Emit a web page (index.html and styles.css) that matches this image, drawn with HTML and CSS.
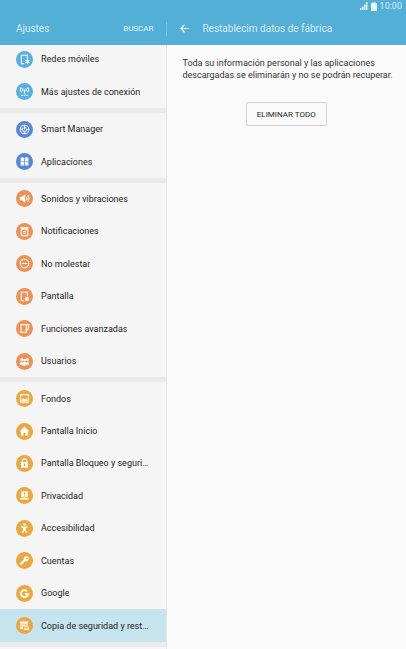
FILE: index.html
```html
<!DOCTYPE html>
<html lang="es">
<head>
    <meta charset="UTF-8">
    <meta name="viewport" content="width=device-width, initial-scale=1.0">
    <title>Ajustes</title>
    <link rel="stylesheet" href="styles.css">
</head>
<body>
    <header class="top">
        <div class="status">
            <svg class="signal" viewBox="0 0 16 16" aria-hidden="true"><path d="M0 16v-4h3v4zM4 16v-7h3v7zM8 16v-11h3v11zM12 16v-16h3v16z"/></svg>
            <svg class="battery" viewBox="0 0 12 18" aria-hidden="true"><path d="M3 0h6v2h3v16H0V2h3z"/></svg>
            <span>10:00</span>
        </div>
        <div class="bar">
            <div class="bar-left">
                <h1>Ajustes</h1>
                <button class="search">BUSCAR</button>
            </div>
            <div class="bar-right">
                <button class="back" aria-label="Atrás">
                    <svg viewBox="0 0 24 24"><path d="M23 12H3M12 2L2 12l10 10"/></svg>
                </button>
                <h2>Restablecim datos de fábrica</h2>
            </div>
        </div>
    </header>

    <main>
        <nav class="sidebar">
            <ul class="group sky">
                <li><a href="#"><svg class="icon" viewBox="0 0 48 48"><path d="M23 36H15V12h17v10M32 23v14M26 26l12 7M38 26l-12 7"/></svg><span>Redes móviles</span></a></li>
                <li><a href="#"><svg class="icon" viewBox="0 0 48 48"><path d="M15 12q-5 7 0 14M33 12q5 7 0 14M20 15q-3 4 0 8M28 15q3 4 0 8M24 18v12"/><path class="fill" d="M15 33h4v4h-4zM22 33h4v4h-4zM29 33h4v4h-4z"/></svg><span>Más ajustes de conexión</span></a></li>
            </ul>
            <ul class="group blue">
                <li><a href="#"><svg class="icon" viewBox="0 0 48 48"><circle cx="24" cy="24" r="12"/><circle cx="24" cy="24" r="6" stroke-dasharray="6 2"/><path d="M24 15v9M15 24h4M29 24h4M24 29v4"/></svg><span>Smart Manager</span></a></li>
                <li><a href="#"><svg class="icon" viewBox="0 0 48 48"><path class="fill" d="M13 13h10v10H13zM25 13h10v10H25zM13 25h10v10H13zM25 25h10v10H25z"/></svg><span>Aplicaciones</span></a></li>
            </ul>
            <ul class="group orange">
                <li><a href="#"><svg class="icon" viewBox="0 0 48 48"><path class="fill" d="M11 19h6l9-7v24l-9-7h-6z"/><path d="M29 19q4 5 0 10M33 15q7 9 0 18"/></svg><span>Sonidos y vibraciones</span></a></li>
                <li><a href="#"><svg class="icon" viewBox="0 0 48 48"><path d="M15 13h18v23H15zM15 18h18M20 24h8M20 29h8M20 11v6M28 11v6"/></svg><span>Notificaciones</span></a></li>
                <li><a href="#"><svg class="icon" viewBox="0 0 48 48"><circle cx="24" cy="24" r="12"/><path d="M17 24h14"/></svg><span>No molestar</span></a></li>
                <li><a href="#"><svg class="icon" viewBox="0 0 48 48"><path d="M22 36H15V12h17v11"/><circle cx="31" cy="31" r="5"/><circle class="fill" cx="31" cy="31" r="3"/></svg><span>Pantalla</span></a></li>
                <li><a href="#"><svg class="icon" viewBox="0 0 48 48"><path d="M14 13h15v22H14zM29 14l7-1-2 13-5 5"/></svg><span>Funciones avanzadas</span></a></li>
                <li><a href="#"><svg class="icon" viewBox="0 0 48 48"><g class="fill"><circle cx="16" cy="19" r="4"/><circle cx="32" cy="19" r="4"/><path d="M11 33q0-10 6-9l3 5-3 4zM37 33q0-10-6-9l-3 5 3 4z"/><circle cx="24" cy="20" r="4"/><path d="M18 35q0-10 6-10t6 10z"/></g></svg><span>Usuarios</span></a></li>
            </ul>
            <ul class="group amber">
                <li><a href="#"><svg class="icon" viewBox="0 0 48 48"><rect x="13" y="13" width="22" height="22" rx="2"/><path class="fill" d="M16 32v-5l5-3 4 3 4-4 3 3v6z"/></svg><span>Fondos</span></a></li>
                <li><a href="#"><svg class="icon" viewBox="0 0 48 48"><path class="fill" d="M24 10l14 14h-4v12h-7v-8h-6v8h-7V24h-4z"/></svg><span>Pantalla Inicio</span></a></li>
                <li><a href="#"><svg class="icon" viewBox="0 0 48 48"><path d="M18 22v-5q0-6 6-6t6 6v5"/><path class="fill" fill-rule="evenodd" d="M14 20h20v16H14zM22 25v6h4v-6z"/></svg><span>Pantalla Bloqueo y seguri…</span></a></li>
                <li><a href="#"><svg class="icon" viewBox="0 0 48 48"><path class="fill" fill-rule="evenodd" d="M15 12h18v17H15zM22 15v7h4v-7zM22 24v3h4v-3zM12 31h24v4H12z"/></svg><span>Privacidad</span></a></li>
                <li><a href="#"><svg class="icon" viewBox="0 0 48 48"><circle class="fill" cx="24" cy="13" r="4"/><path class="fill" d="M14 17l7 2h6l7-2v3l-6 3v6l4 8h-4l-4-8-4 8h-4l4-8v-6l-6-3z"/></svg><span>Accesibilidad</span></a></li>
                <li><a href="#"><svg class="icon" viewBox="0 0 48 48"><path class="fill" fill-rule="evenodd" d="M22 22q-2-5 3-9 6-3 10 2 3 6-2 10-4 3-8 1l-4 4-1 4-3-1-2 4-4-1v-4zM29 16v4h4v-4z"/></svg><span>Cuentas</span></a></li>
                <li><a href="#"><svg class="icon bold" viewBox="0 0 48 48"><path d="M31 17a10 10 0 1 0 3 8h-9"/></svg><span>Google</span></a></li>
                <li class="selected"><a href="#"><svg class="icon" viewBox="0 0 48 48"><path class="fill" d="M12 13h22v6H12zM12 21h22v3H22l-1 3h-9zM12 29h8v5h-8z"/><path d="M24 28q7-4 11 1v6H25v-5"/></svg><span>Copia de seguridad y rest…</span></a></li>
            </ul>
        </nav>

        <section class="content">
            <p>Toda su información personal y las aplicaciones descargadas se eliminarán y no se podrán recuperar.</p>
            <button class="erase">ELIMINAR TODO</button>
        </section>
    </main>
</body>
</html>
```
FILE: styles.css
```css
* {
    box-sizing: border-box;
}

body {
    font-family: Roboto, sans-serif;
    font-size: 9px;
    color: #333;
    background-color: #fafafa;
    margin: 0;
    height: 100vh;
    display: flex;
    flex-direction: column;
    overflow: hidden;
}

button {
    font: inherit;
    color: inherit;
    background: none;
    border: none;
    padding: 0;
    cursor: pointer;
}

.top {
    position: relative;
    z-index: 1;
    background-color: #53afd6;
    color: #d5edf7;
    flex: none;
}

.status {
    display: flex;
    justify-content: flex-end;
    align-items: center;
    height: 12px;
    padding-right: 4px;
}

.status svg {
    fill: #e3f4fa;
}

.signal {
    width: 8px;
    height: 8px;
    margin-right: 3px;
}

.battery {
    width: 6px;
    height: 9px;
    margin-right: 3px;
}

.bar {
    display: flex;
    height: 33px;
    align-items: center;
}

.bar-left {
    width: 41%;
    display: flex;
    justify-content: space-between;
    align-items: center;
    padding: 0 13px 0 16px;
}

.bar-right {
    flex: 1;
    display: flex;
    align-items: center;
    height: 14px;
    padding-left: 13px;
    border-left: 1px solid #7cc3e0;
}

h1,
h2 {
    font-size: 10px;
    font-weight: 400;
    margin: 0;
}

.search {
    font-size: 8px;
    color: #e3f4fa;
}

.back {
    display: flex;
    margin-right: 13px;
}

.back svg {
    width: 9px;
    height: 9px;
    fill: none;
    stroke: #fff;
    stroke-width: 3;
}

main {
    flex: 1;
    display: flex;
    min-height: 0;
}

.sidebar {
    width: 41%;
    overflow: hidden;
    background-color: #f5f5f5;
    box-shadow: 0 0 0 1px #e4e4e4;
}

.group {
    list-style: none;
    margin: 0;
    padding: 0;
    border-bottom: 5px solid #eaeaea;
}

/* list is slightly scrolled under the header */
.group:first-child {
    margin-top: -2px;
}

.group a {
    display: flex;
    align-items: center;
    gap: 8px;
    height: 5vh;
    padding: 0 8px 0 16px;
    color: #252525;
    text-decoration: none;
}

.group span {
    overflow: hidden;
    white-space: nowrap;
    text-overflow: ellipsis;
}

.selected {
    background-color: #c5e4ee;
}

.icon {
    flex: none;
    width: 17px;
    height: 17px;
    border-radius: 50%;
    fill: none;
    stroke: #fff;
    stroke-width: 3;
}

.icon .fill {
    fill: #fff;
    stroke: none;
}

.bold {
    stroke-width: 5;
}

.sky .icon {
    background-color: #59afe1;
}

.blue .icon {
    background-color: #5588d8;
}

.orange .icon {
    background-color: #ee9156;
}

.amber .icon {
    background-color: #eaa83f;
}

.content {
    flex: 1;
    padding: 12px 8px 12px 16px;
    text-align: center;
}

.content p {
    margin: 0 0 21px;
    line-height: 12px;
    text-align: left;
}

.erase {
    font-size: 8px;
    height: 24px;
    margin-right: 8px;
    padding: 0 10px;
    border: 1px solid #d2d2d2;
    border-radius: 2px;
    color: #252525;
}
```
